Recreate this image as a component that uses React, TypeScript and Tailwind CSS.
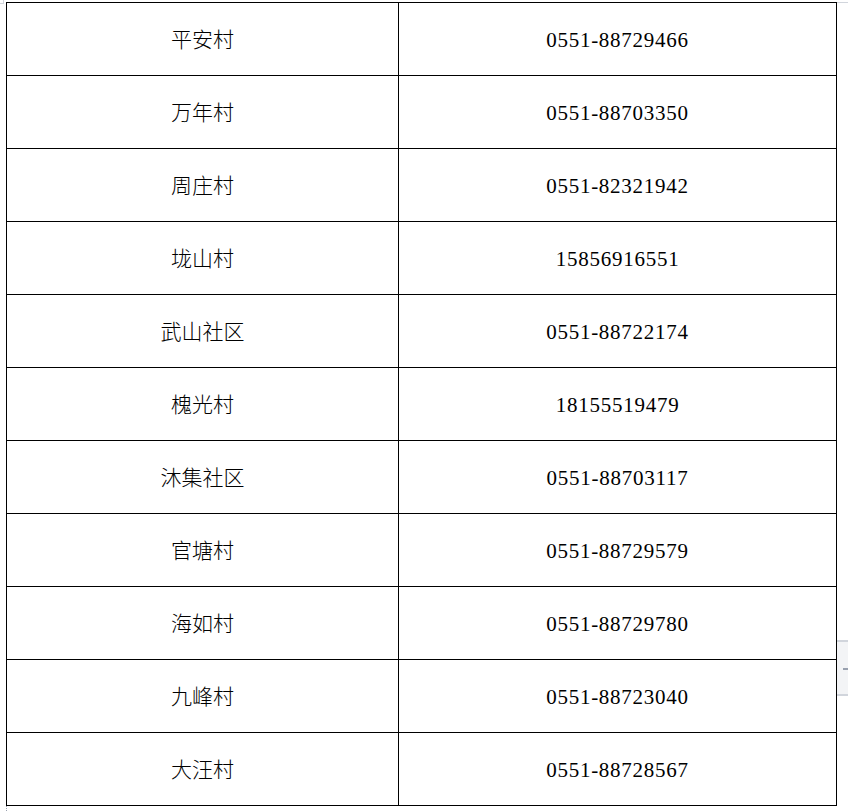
const rows = [
  { name: "平安村", phone: "0551-88729466" },
  { name: "万年村", phone: "0551-88703350" },
  { name: "周庄村", phone: "0551-82321942" },
  { name: "垅山村", phone: "15856916551" },
  { name: "武山社区", phone: "0551-88722174" },
  { name: "槐光村", phone: "18155519479" },
  { name: "沐集社区", phone: "0551-88703117" },
  { name: "官塘村", phone: "0551-88729579" },
  { name: "海如村", phone: "0551-88729780" },
  { name: "九峰村", phone: "0551-88723040" },
  { name: "大汪村", phone: "0551-88728567" },
];

export default function App() {
  return (
    <div
      className="relative w-[848px] h-[811px] bg-white overflow-hidden text-black"
      style={{ fontFamily: '"Liberation Serif", "Noto Sans CJK SC", serif' }}
    >
      {/* page corner marks */}
      <div className="absolute left-0 top-0 w-[4px] h-[4px] border-r border-b border-gray-300" />
      <div className="absolute left-[837px] top-[2px] w-[11px] border-t border-gray-300" />

      <div className="pt-[2px] pl-[6px]">
        <div className="grid w-[831px] grid-cols-[392px_438px] border-l border-t border-black">
          {rows.map((r) => (
            <div key={r.name} className="contents">
              <div className="flex h-[73px] items-center justify-center border-r border-b border-black pt-[3px] text-[21px] font-light">
                {r.name}
              </div>
              <div className="flex h-[73px] items-center justify-center border-r border-b border-black pt-[3px] text-[21px] tracking-[0.75px]">
                {r.phone}
              </div>
            </div>
          ))}
        </div>
        <div className="h-[5px] w-0 border-l border-dotted border-gray-400" />
      </div>

      {/* side handle */}
      <div className="absolute left-[837px] top-[640px] h-[56px] w-[11px] border-t-2 border-b-2 border-gray-300 bg-gray-100">
        <div className="absolute left-[6px] top-[26px] h-[2px] w-[5px] bg-gray-400" />
      </div>
    </div>
  );
}
